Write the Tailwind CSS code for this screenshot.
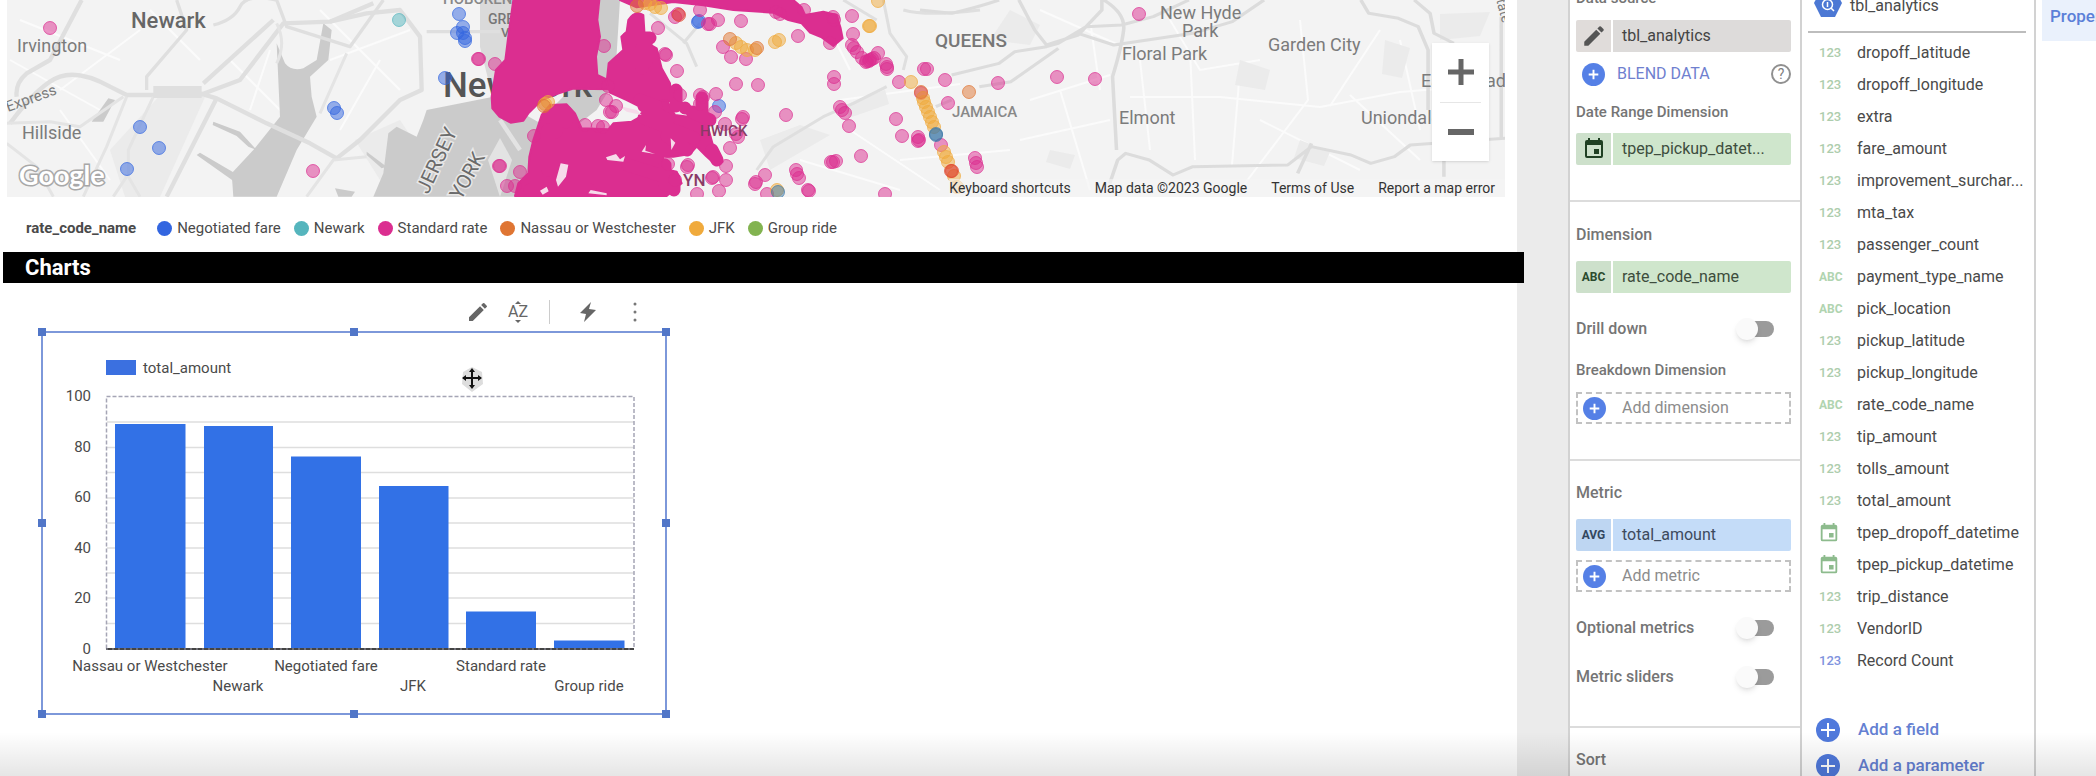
<!DOCTYPE html>
<html lang="en">
<head>
<meta charset="utf-8">
<meta name="viewport" content="width=device-width, initial-scale=1">
<title>Taxi report</title>
<script src="https://cdn.jsdelivr.net/npm/@tailwindcss/browser@4"></script>
</head>
<body class="relative flex h-screen overflow-hidden bg-[#ebebeb] font-['Roboto',sans-serif] text-[#4a4a4a]">

<svg class="hidden" aria-hidden="true">
  <symbol id="plus" viewBox="0 0 24 24"><circle cx="12" cy="12" r="12" fill="#5580e6"/><path d="M12 7v10M7 12h10" stroke="#fff" stroke-width="2"/></symbol>
  <symbol id="plus-big" viewBox="0 0 24 24"><circle cx="12" cy="12" r="12" fill="#5079dc"/><path d="M12 5v14M5 12h14" stroke="#fff" stroke-width="2"/></symbol>
  <symbol id="pencil" viewBox="0 0 24 24"><path fill="currentColor" d="M3 17.250V21h3.750L17.810 9.940l-3.750-3.750zM20.710 7.040a1 1 0 0 0 0-1.410l-2.340-2.340a1 1 0 0 0-1.410 0l-1.830 1.830 3.750 3.750z"/></symbol>
  <symbol id="cal" viewBox="0 0 24 24"><path fill="currentColor" d="M17 12h-5v5h5zM16 1v2H8V1H6v2H5a2 2 0 0 0-2 2v14a2 2 0 0 0 2 2h14a2 2 0 0 0 2-2V5a2 2 0 0 0-2-2h-1V1zm3 18H5V8h14z"/></symbol>
</svg>

<!-- Report canvas -->
<main class="mr-[51px] min-w-0 flex-1 bg-white">
  <section aria-label="Map" class="relative mr-3 ml-[7px] h-[197px] overflow-hidden bg-[#f3f3f3]">
    <svg class="h-full w-full" viewBox="7 0 1498 197" preserveAspectRatio="xMinYMin slice" fill="none">
      <!-- minor streets -->
      <g stroke="#fbfbfb" stroke-width="2">
        <path d="M1130 97L1220 97L1320 107L1400 92L1500 84M1140 60L1150 150M1190 50L1195 160M1240 70L1232 165M1300 20L1308 100L1240 190M1350 95L1420 160M1380 30L1330 106M1030 100L1110 75M1020 140L1110 120M1060 90L1090 190M1170 20L1200 70L1260 60M1400 40L1420 130M1260 120L1360 170M1040 10L1130 50M1090 20L1100 90M820 10L850 70M840 100L960 84M850 130L940 190M900 160L1010 150M800 160L900 190M20 20L120 60M60 90L140 30M150 10L200 60M230 60L290 120M250 110L270 50M320 10L400 90M330 60L410 30M340 130L380 60M60 110L110 180M10 60L100 110"/>
      </g>
      <g fill="#ebebeb">
        <path d="M163 92L205 97L160 197H125L110 150Z"/><path d="M355 140L400 120L420 150L380 180Z"/>
        <path d="M1240 60l30 10-5 20-30-5zM1385 40l25 8-8 30-20-4zM1300 140l30 12-6 14-30-8zM990 40l40 5 10-20-30-15zM1440 14l50-2-10 24-40 4zM760 140l40-15 30 10-60 35zM845 105l40-15 4 14-40 14zM1050 150l25 5-5 14-24-7z"/>
      </g>
      <!-- water -->
      <g transform="scale(.33333)" fill="#cbcbcb">
        <path d="M830 130L855 190Q875 215 910 205L950 180L970 70L995 90L985 180L930 230L935 290L950 350L890 450L830 590H700L695 520L760 450L840 350Z"/>
        <path d="M640 365L720 395L770 450L745 440L710 408L638 375ZM600 458L705 520L710 550L590 465Z"/>
        <path d="M1280 330L1480 290L1640 380L1660 590H1120L1150 520L1165 400L1190 380L1250 410L1270 360Z"/>
        <path d="M1440 0H1560V300H1480L1440 140Z" fill="#dadada"/>
        <path d="M1100 455l60 45-15 5-45-40zM1005 565l60 10-10 15h-40zM275 365l50-70 20 5-35 65z"/>
        <path d="M1800 0H1860L1845 240L1790 330L1700 400L1600 380L1700 280L1780 180Z"/>
      </g>
      <path d="M488 160L500 138L512 160L500 197" fill="#e3e3e3"/>
      <!-- highways -->
      <g transform="scale(.33333)" stroke="#dfdfdf" stroke-width="13" stroke-linejoin="round">
        <path d="M245 0L150 180L80 220Q45 250 50 290M30 370Q120 250 180 230T330 260L380 285H600L720 240L850 70L990 65L1120 10"/>
        <path d="M600 280L650 295L800 370L930 430L1010 475L1080 420L1200 300L1265 270L1260 110L1200 30L1100 40L990 65"/>
        <path d="M530 0L560 90L440 230V270M640 75Q700 60 720 20T830 0L860 80L1050 140L1150 0M1280 95H1500" stroke-width="10"/>
        <path d="M820 60L610 250M650 295L500 590"/>
        <path d="M380 290L320 440L250 590M20 370L150 365L240 380L370 290M460 290L385 450V530L420 590M340 590L380 530" stroke-width="9" stroke="#e4e4e4"/>
        <path d="M830 70Q860 130 830 190M1040 160L960 340M920 590L1000 480L1100 470M20 430L110 500L160 590" stroke-width="9" stroke="#e4e4e4"/>
        <path d="M460 276H605" stroke-width="36"/>
        <path d="M1500 360L1560 450" stroke="#e3e3e3"/>
      </g>
      <g transform="translate(460 0) scale(.33333)" stroke="#dfdfdf" stroke-width="9" stroke-linejoin="round">
        <path d="M570 40L680 130L710 200M670 130L720 70M890 510L940 440L1090 350L1180 310L1280 260M1270 0L1290 100L1340 170L1330 210M1150 0L1250 60M1330 30Q1400 50 1560 30"/>
      </g>
      <g transform="translate(920 0) scale(.39540 .33333)" stroke="#dcdcdc" stroke-width="9" stroke-linejoin="round">
        <path d="M0 30L80 40Q150 20 200 0M250 0L290 90L320 135L400 105L460 30V0M80 225L200 190L240 155L320 140L350 130L420 80L510 75L590 50L680 0M400 100L490 135L690 100L790 65L870 0M465 0Q520 40 515 90T487 230L497 450"/>
        <path d="M150 260L230 245L350 145M480 550L500 480L520 460L580 480L640 525L690 500L930 495L990 440L1090 465L1140 490L1200 470L1240 435L1480 415M1115 0L1135 40L1210 55L1260 80L1285 150V330M1250 0L1290 40L1300 100L1350 130M1325 480V530M990 430L955 520M1470 50V420M40 320L80 300"/>
      </g>
      <!-- place names -->
      <g class="font-medium" fill="#666">
        <text x="131" y="28" font-size="22">Newark</text>
        <text x="443" y="97" font-size="35" fill="#555">New York</text>
        <text x="443" y="4" font-size="15" fill="#888">HOBOKEN</text>
        <text x="488" y="24" font-size="14" fill="#777">GREENWICH</text>
        <text x="501" y="37" font-size="13" fill="#777">VILLAGE</text>
        <text x="935" y="47" font-size="19" fill="#777">QUEENS</text>
        <text x="952" y="117" font-size="15" fill="#888">JAMAICA</text>
      </g>
      <g fill="#7b7b7b" font-size="18">
        <text x="17" y="52">Irvington</text>
        <text x="22" y="139">Hillside</text>
        <text x="8" y="112" font-size="15" transform="rotate(-20 8 112)">Express</text>
        <text x="1160" y="19">New Hyde</text><text x="1182" y="37">Park</text>
        <text x="1122" y="60">Floral Park</text><text x="1268" y="51">Garden City</text>
        <text x="1119" y="124">Elmont</text><text x="1361" y="124">Uniondale</text><text x="1421" y="87">East Mead</text>
        <text x="1494" y="-8" font-size="14" transform="rotate(75 1494 -8)">State</text>
        <g fill="#6b6b6b" stroke="#e8e8e8" stroke-width="3" paint-order="stroke" font-size="20"><text x="428" y="195" transform="rotate(-65 428 195)">JERSEY</text><text x="461" y="201" transform="rotate(-61 461 201)">YORK</text></g>
      </g>
      <!-- dense trip clusters -->
      <g transform="translate(460 0) scale(.33333)" fill="#db2e90" stroke="#db2e90" stroke-width="6" stroke-linejoin="round">
        <path d="M160 0H418L412 60L420 110L408 170L412 225L440 238L460 268L340 266L290 282L245 300L205 340L190 362L152 368L118 350L97 325L95 290L108 210L136 180L146 100Z"/>
        <path d="M505 60Q525 30 550 45L555 125L590 145L605 205L630 250L635 300L600 318L560 330L500 300L450 278L440 245L446 190L490 150L484 110L500 95Z"/>
        <path d="M480 0H1000L1025 22L1035 45L1090 35L1130 45L1142 85L1148 115L1120 138L1085 112L1050 98L1025 70L985 60L940 38L820 30L730 16L640 6L530 22Z"/>
        <path d="M245 345L270 315L320 313L345 340L365 385L445 388L460 370L515 365L550 345L565 310L620 300L645 345L720 355L745 385L760 440L788 485L768 495L738 468L710 440L690 462L640 470L610 470L605 505L650 515L665 550L620 588H165L175 550L205 520L208 470L220 420Z"/>
      </g>
      <!-- round bumps on the cluster edges -->
      <path d="M676 90v16M685 108h0M702 98v12M692 112l18 8M644 106l24 14M667 136l20 14M640 100l16 6M644 118l50 20M674 178l0 12M665 165v20M628 165l44 14M530 190h60M556 112v20M548 130v40M712 150l5 10M642 48v20M628 38l22 0M646 42v20M566 112v10" stroke="#db2e90" stroke-width="13" stroke-linecap="round"/>
      <g transform="translate(460 0) scale(.33333)" fill="#f6dbea">
        <path d="M288 540L302 490L325 494L318 530L294 560ZM438 472L468 462L480 478L495 468L490 485L442 480ZM545 455L558 435L556 452L585 462ZM385 580L392 570L440 580L440 586ZM632 415L646 428L634 450ZM240 572L260 560L266 574L248 584ZM478 318L530 330L545 345L500 335Z"/>
      </g>
      <g id="dots"></g>
      <g fill="#8a3a66" font-size="15" class="font-medium"><text x="700" y="136">HWICK</text><text x="683" y="186" font-size="17">YN</text></g>
      <text x="19" y="185" font-size="27" font-family="Lato, sans-serif" font-weight="700" fill="#fff" stroke="#a8a8a8" stroke-width="3" paint-order="stroke">Google</text>
    </svg>
    <div class="absolute right-4 bottom-9 flex h-[118px] w-[57px] flex-col bg-white px-2 text-[#666] shadow">
      <button aria-label="Zoom in" class="flex flex-1 items-center justify-center border-b border-[#e6e6e6]"><svg class="size-[26px]" viewBox="0 0 26 26"><path d="M13 0v26M0 13h26" stroke="currentColor" stroke-width="5"/></svg></button>
      <button aria-label="Zoom out" class="flex flex-1 items-center justify-center"><svg class="size-[26px]" viewBox="0 0 26 26"><path d="M0 13h26" stroke="currentColor" stroke-width="6"/></svg></button>
    </div>
    <div class="absolute right-0 bottom-0 flex h-[18px] items-center gap-6 bg-[#f5f5f5]/60 pr-[10px] text-[14px] leading-[18px] text-[#333]">
      <button>Keyboard shortcuts</button><span>Map data ©2023 Google</span><a href="#">Terms of Use</a><a href="#">Report a map error</a>
    </div>
  </section>

  <div class="flex h-[55px] items-center gap-[13px] pt-2 pl-[26px] text-[15px]">
    <span class="mr-2 font-bold">rate_code_name</span>
    <span class="flex items-center gap-[5px]"><i class="size-[15px] rounded-full bg-[#3366e0]"></i>Negotiated fare</span>
    <span class="flex items-center gap-[5px]"><i class="size-[15px] rounded-full bg-[#55b5bd]"></i>Newark</span>
    <span class="flex items-center gap-[5px]"><i class="size-[15px] rounded-full bg-[#db2e90]"></i>Standard rate</span>
    <span class="flex items-center gap-[5px]"><i class="size-[15px] rounded-full bg-[#df7533]"></i>Nassau or Westchester</span>
    <span class="flex items-center gap-[5px]"><i class="size-[15px] rounded-full bg-[#f0aa3c]"></i>JFK</span>
    <span class="flex items-center gap-[5px]"><i class="size-[15px] rounded-full bg-[#82b350]"></i>Group ride</span>
  </div>

  <h2 class="mr-[-7px] ml-[3px] flex h-[31px] items-center bg-black pl-[22px] text-[22px] font-bold text-white">Charts</h2>

  <section aria-label="Bar chart" class="mt-[10px] ml-[41px] w-[626px]">
    <div class="flex h-[38px] items-center justify-end pr-[22px] text-[#666]">
      <button aria-label="Edit"><svg class="size-6 text-[#666]"><use href="#pencil"/></svg></button>
      <button aria-label="Sort" class="ml-4 flex w-6 flex-col items-center text-base leading-4"><svg class="h-[3px] w-[6px]" viewBox="0 0 8 4"><path d="M0 4L4 0L8 4Z" fill="currentColor"/></svg>AZ<svg class="h-[3px] w-[6px]" viewBox="0 0 8 4"><path d="M0 0L4 4L8 0Z" fill="currentColor"/></svg></button>
      <span class="ml-[19px] h-6 w-px bg-[#ccc]"></span>
      <button aria-label="Quick actions" class="ml-[26px]"><svg class="size-6" viewBox="0 0 24 24"><path d="M15 2L4 13L10 14L8 22L20 10L13 9Z" fill="#666"/></svg></button>
      <button aria-label="More" class="ml-[25px]"><svg class="h-6 w-5" viewBox="0 0 20 24" fill="#777"><circle cx="10" cy="4" r="1.500"/><circle cx="10" cy="12" r="1.500"/><circle cx="10" cy="20" r="1.500"/></svg></button>
    </div>
    <div class="relative border-2 border-[#7d98da]">
      <svg class="block h-auto w-full" viewBox="43 332 622 380" font-size="15" fill="#4a4a4a">
        <rect x="106" y="359" width="30" height="15" fill="#3b70e0"/><text x="143" y="372">total_amount</text>
        <path d="M107 421H634M107 446.500H634M107 471.500H634M107 497H634M107 522H634M107 547H634M107 572H634M107 597H634M107 622.500H634" stroke="#dedede" stroke-width="1.500"/>
        <g fill="#3271e6"><path d="M115 423h70.500v225H115zM204 425h69v223h-69zM291 455.500h70V648h-70zM379 485h69.500v163H379zM466 610.500h70V648h-70zM554 639.500h70.500v8.500H554z"/></g>
        <rect x="106.500" y="395.500" width="527.500" height="252.500" fill="none" stroke="#a5a5b5" stroke-width="1.500" stroke-dasharray="4 2"/>
        <path d="M106 648H634" stroke="#444" stroke-width="2"/><path d="M106 648H634" stroke="#99a" stroke-dasharray="2 4"/>
        <g text-anchor="end"><text x="91" y="400">100</text><text x="91" y="451">80</text><text x="91" y="501">60</text><text x="91" y="552">40</text><text x="91" y="602">20</text><text x="91" y="653">0</text></g>
        <g text-anchor="middle"><text x="150" y="670">Nassau or Westchester</text><text x="238" y="690">Newark</text><text x="326" y="670">Negotiated fare</text><text x="413" y="690">JFK</text><text x="501" y="670">Standard rate</text><text x="589" y="690">Group ride</text></g>
        <!-- move cursor -->
        <path d="M463 371L472 366L482 371L483 383L472 391L462 383Z" fill="#ddd"/>
        <path d="M472 369V386M463 377H481" stroke="#111" stroke-width="2"/><path d="M472 367l3 4h-6zM472 388l3-4h-6zM462 377l4-3v6zM482 377l-4-3v6z" fill="#111"/>
      </svg>
      <i class="absolute -top-[5px] -left-[5px] size-2 bg-[#5176c8]"></i><i class="absolute -top-[5px] left-1/2 -ml-1 size-2 bg-[#5176c8]"></i><i class="absolute -top-[5px] -right-[5px] size-2 bg-[#5176c8]"></i>
      <i class="absolute top-1/2 -left-[5px] -mt-1 size-2 bg-[#5176c8]"></i><i class="absolute top-1/2 -right-[5px] -mt-1 size-2 bg-[#5176c8]"></i>
      <i class="absolute -bottom-[5px] -left-[5px] size-2 bg-[#5176c8]"></i><i class="absolute -bottom-[5px] left-1/2 -ml-1 size-2 bg-[#5176c8]"></i><i class="absolute -right-[5px] -bottom-[5px] size-2 bg-[#5176c8]"></i>
    </div>
  </section>
</main>

<!-- Setup panel -->
<aside class="w-[234px] shrink-0 border-x-2 border-[#d2d2d2] bg-white text-[#757575]">
  <section class="border-b-2 border-[#dcdcdc] pr-[9px] pb-[35px] pl-[6px]">
    <h3 class="-mt-3 h-5 text-[15px] leading-5 font-medium">Data source</h3>
    <button class="mt-3 flex h-8 w-full items-center gap-[2px] text-left text-base text-[#444]"><span class="flex h-full w-[35px] items-center justify-center rounded-l-xs bg-[#e0dcda]"><svg class="size-[26px] text-[#555]"><use href="#pencil"/></svg></span><span class="flex h-full flex-1 items-center rounded-r-xs bg-[#dddbda] pl-[9px]">tbl_analytics</span></button>
    <div class="flex h-10 items-center pt-1 pl-[6px]">
      <button class="flex items-center gap-3 text-base text-[#6f80cf]"><svg class="size-[23px]"><use href="#plus"/></svg>BLEND DATA</button>
      <button aria-label="Help" class="ml-auto flex size-5 items-center justify-center rounded-full border-2 border-[#909090] text-[14px] leading-4 text-[#808080]">?</button>
    </div>
    <h3 class="mt-[10px] h-5 text-[15px] leading-5 font-medium">Date Range Dimension</h3>
    <button class="mt-[11px] flex h-8 w-full items-center gap-[2px] text-left text-base text-[#3d4d3d]"><span class="flex h-full w-[35px] items-center justify-center rounded-l-xs bg-[#cde0cb] text-[#1f3f22]"><svg class="size-6"><use href="#cal"/></svg></span><span class="flex h-full flex-1 items-center rounded-r-xs bg-[#cfe6cc] pl-[9px]">tpep_pickup_datet...</span></button>
  </section>
  <section class="border-b-2 border-[#dcdcdc] pt-[23px] pr-[9px] pb-[35px] pl-[6px]">
    <h3 class="h-5 text-base leading-5 font-medium">Dimension</h3>
    <button class="mt-4 flex h-8 w-full items-center gap-[2px] text-left text-base text-[#3d4d3d]"><span class="flex h-full w-[35px] items-center justify-center rounded-l-xs bg-[#cde0cb] text-xs font-bold text-[#2b4a2d]">ABC</span><span class="flex h-full flex-1 items-center rounded-r-xs bg-[#cfe6cc] pl-[9px]">rate_code_name</span></button>
    <label class="mt-6 flex h-6 items-center justify-between pr-[17px] text-base font-medium">Drill down<input type="checkbox" role="switch" class="relative h-4 w-8 appearance-none rounded-full bg-[#9b9b9b] before:absolute before:top-[-3px] before:left-[-6px] before:size-[22px] before:rounded-full before:bg-[#fafafa] before:shadow-md"></label>
    <h3 class="mt-[19px] h-5 text-[15px] leading-5 font-medium">Breakdown Dimension</h3>
    <button class="mt-3 flex h-8 w-full items-center gap-4 border-2 border-dashed border-[#c2c2c2] pl-[5px] text-base text-[#8c8c8c]"><svg class="size-[23px]"><use href="#plus"/></svg>Add dimension</button>
  </section>
  <section class="border-b-2 border-[#dcdcdc] pt-[22px] pr-[9px] pb-[37px] pl-[6px]">
    <h3 class="h-5 text-base leading-5 font-medium">Metric</h3>
    <button class="mt-4 flex h-8 w-full items-center gap-[2px] text-left text-base text-[#3d4a5d]"><span class="flex h-full w-[35px] items-center justify-center rounded-l-xs bg-[#bed6f2] text-xs font-bold text-[#33475f]">AVG</span><span class="flex h-full flex-1 items-center rounded-r-xs bg-[#c4dcf8] pl-[9px]">total_amount</span></button>
    <button class="mt-[9px] flex h-8 w-full items-center gap-4 border-2 border-dashed border-[#c2c2c2] pl-[5px] text-base text-[#8c8c8c]"><svg class="size-[23px]"><use href="#plus"/></svg>Add metric</button>
    <label class="mt-6 flex h-6 items-center justify-between pr-[17px] text-base font-medium">Optional metrics<input type="checkbox" role="switch" class="relative h-4 w-8 appearance-none rounded-full bg-[#9b9b9b] before:absolute before:top-[-3px] before:left-[-6px] before:size-[22px] before:rounded-full before:bg-[#fafafa] before:shadow-md"></label>
    <label class="mt-[25px] flex h-6 items-center justify-between pr-[17px] text-base font-medium">Metric sliders<input type="checkbox" role="switch" class="relative h-4 w-8 appearance-none rounded-full bg-[#9b9b9b] before:absolute before:top-[-3px] before:left-[-6px] before:size-[22px] before:rounded-full before:bg-[#fafafa] before:shadow-md"></label>
  </section>
  <h3 class="pt-[22px] pl-[6px] text-base leading-5 font-medium">Sort</h3>
</aside>

<!-- Data fields -->
<aside class="w-[234px] shrink-0 overflow-hidden border-r-2 border-[#d2d2d2] bg-white">
  <div class="mr-2 ml-[6px] -mt-3 flex h-[45px] gap-2 border-b-2 border-[#bdbdbd] pl-[6px]">
    <svg class="h-[30px] w-7" viewBox="0 0 28 30"><path d="M7 2H21L28 15L21 29H7L0 15Z" fill="#4c78d4"/><circle cx="13.500" cy="16.500" r="5" fill="none" stroke="#fff" stroke-width="1.500"/><path d="M13.500 14v5M17 20l3 3" stroke="#fff" stroke-width="1.500"/></svg>
    <span class="pt-2 text-base leading-5">tbl_analytics</span>
  </div>
  <ul id="fields" class="pt-1 text-base"></ul>
  <div class="mt-[41px] flex flex-col gap-3 pl-[14px] text-[17px] text-[#6480d2]">
    <button class="flex h-6 items-center gap-[18px] font-medium"><svg class="size-6"><use href="#plus-big"/></svg>Add a field</button>
    <button class="flex h-6 items-center gap-[18px] font-medium"><svg class="size-6"><use href="#plus-big"/></svg>Add a parameter</button>
  </div>
</aside>

<!-- Properties -->
<aside class="w-[60px] shrink-0 overflow-hidden bg-white pl-[6px]">
  <button class="flex h-[41px] w-[140px] items-center bg-[#eaf1fc] pb-2 pl-2 text-[17px] font-medium text-[#5b80d8]">Properties</button>
</aside>

<div class="pointer-events-none absolute inset-x-0 bottom-0 h-11 bg-linear-to-b from-black/0 to-black/10"></div>

<template id="num"><li class="flex h-8 items-center"><span class="ml-[17px] w-[38px] text-[13px] font-medium text-[#adcdad]">123</span><span></span></li></template>
<template id="abc"><li class="flex h-8 items-center"><span class="ml-[17px] w-[38px] text-xs font-bold text-[#b0d4b0]">ABC</span><span></span></li></template>
<template id="date"><li class="flex h-8 items-center"><svg class="mr-[17px] ml-4 size-[22px] text-[#8dbb8d]"><use href="#cal"/></svg><span></span></li></template>
<template id="rec"><li class="flex h-8 items-center"><span class="ml-[17px] w-[38px] text-[13px] font-medium text-[#7f93de]">123</span><span></span></li></template>

<script>
const fields = [['num','dropoff_latitude'],['num','dropoff_longitude'],['num','extra'],['num','fare_amount'],['num','improvement_surchar...'],['num','mta_tax'],['num','passenger_count'],['abc','payment_type_name'],['abc','pick_location'],['num','pickup_latitude'],['num','pickup_longitude'],['abc','rate_code_name'],['num','tip_amount'],['num','tolls_amount'],['num','total_amount'],['date','tpep_dropoff_datetime'],['date','tpep_pickup_datetime'],['num','trip_distance'],['num','VendorID'],['rec','Record Count']];
for (const [kind, name] of fields) {
  const row = document.getElementById(kind).content.cloneNode(true);
  row.querySelector('li').lastElementChild.textContent = name;
  document.getElementById('fields').append(row);
}

const trips = {
  '#3366e0': [[140,127],[159,148],[127,169],[334,108],[337,113],[459,14],[463,27],[457,33],[463,33],[465,41],[465,38],[445,78],[719,106],[698,22],[699,21]],
  '#55b5bd': [[399,20]],
  '#db2e90': [[50,28],[313,171],[478,59],[479,59],[495,64],[499,166],[500,166],[520,172],[507,186],[515,186],
    [604,46],[666,55],[665,54],[658,28],[677,71],[718,20],[741,21],[710,24],[708,24],[700,10],[678,14],[675,17],[723,47],[731,57],[746,59],[798,36],[776,12],[780,14],[804,10],[833,17],[834,20],[830,43],[852,16],[853,34],[852,45],[854,48],[857,52],[862,58],[867,61],[869,61],[872,59],[874,58],[878,53],[866,62],[870,60],[886,64],[887,67],[887,69],[834,84],[834,77],[736,84],[758,85],[899,82],[924,69],[927,69],[921,93],[948,103],[786,115],[840,107],[842,110],[845,113],[849,126],[896,119],[902,136],[918,137],[919,140],[918,141],[861,156],[831,162],[836,161],[833,162],[945,80],[975,158],[976,163],[977,167],[941,145],
    [716,94],[715,112],[700,95],[703,97],[725,124],[742,119],[743,117],[738,137],[736,134],[730,148],[726,166],[713,177],[712,178],[726,180],[719,191],[697,194],[687,167],[688,165],[668,164],[755,184],[756,182],[765,175],[767,194],[796,170],[799,178],[797,174],[808,190],[809,191],[885,194],
    [998,83],[1057,77],[1095,79],[1139,14],[606,100],[612,112],[616,106],[534,136],[585,125],[598,126],[610,112],[675,180],[680,95],[700,104],[603,127],[608,86]],
  '#f0aa3c': [[645,3],[650,4],[655,7],[661,8],[736,43],[741,47],[747,50],[755,50],[775,42],[779,40],[869,26],[870,26],[878,1],[911,82],[923,98],[924,102],[926,107],[928,112],[930,117],[932,122],[934,127],[944,152],[946,157],[948,162],[954,176],[957,187],[545,104],[548,102],[777,190]],
  '#df7533': [[637,6],[730,39],[757,48],[969,92],[921,92],[544,106]],
  '#e04a30': [[679,15],[951,171],[952,171]],
  '#3c78a8': [[936,135],[936,134],[778,192]]
};
const layer = document.getElementById('dots');
for (const [color, points] of Object.entries(trips))
  for (const [x, y] of points) {
    const c = document.createElementNS('http://www.w3.org/2000/svg', 'circle');
    c.setAttribute('cx', x); c.setAttribute('cy', y); c.setAttribute('r', 6.5);
    c.setAttribute('fill', color); c.setAttribute('fill-opacity', .5);
    c.setAttribute('stroke', color); c.setAttribute('stroke-opacity', .7);
    layer.append(c);
  }
</script>
</body>
</html>
